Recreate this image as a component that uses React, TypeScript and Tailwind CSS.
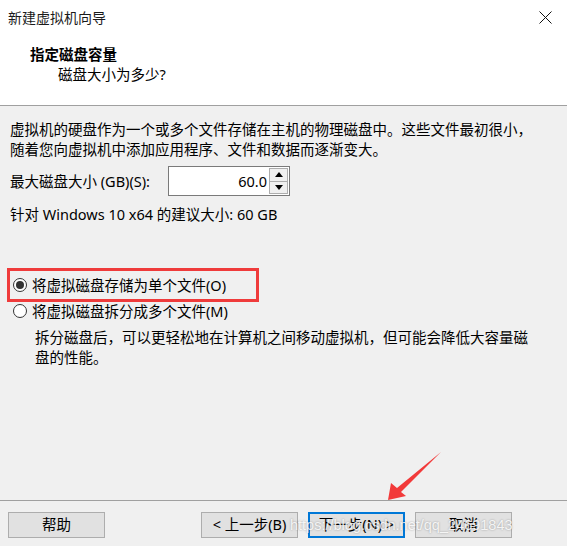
import React from "react";

const font = { fontFamily: '"Noto Sans", "Noto Sans CJK SC", sans-serif' };

function Radio({ checked }: { checked?: boolean }) {
  return (
    <span className="flex h-[14px] w-[14px] shrink-0 items-center justify-center rounded-full border border-[#333333] bg-white">
      {checked && <span className="h-[8px] w-[8px] rounded-full bg-[#333333]" />}
    </span>
  );
}

function Btn({ children, primary }: { children: React.ReactNode; primary?: boolean }) {
  return (
    <div
      className={
        "flex h-[26px] w-[97px] items-center justify-center bg-[#e1e1e1] text-[14.5px] text-black " +
        (primary ? "border-2 border-[#0078d7]" : "border border-[#adadad]")
      }
    >
      {children}
    </div>
  );
}

export default function App() {
  return (
    <div className="relative flex h-[546px] w-[567px] flex-col overflow-hidden bg-[#f0f0f0] text-black" style={font}>
      {/* title bar */}
      <div className="flex h-[36px] shrink-0 items-center justify-between bg-white pl-[8px] pr-[15px]">
        <span className="text-[14px] leading-none text-[#1a1a1a]">新建虚拟机向导</span>
        <svg width="13" height="13" viewBox="0 0 13 13" className="mt-[-1px]">
          <path d="M0.5 0.5 L12.5 12.5 M12.5 0.5 L0.5 12.5" stroke="#111" strokeWidth="1" />
        </svg>
      </div>
      {/* header */}
      <div className="shrink-0 bg-white pb-[21px] pt-[8px]">
        <div className="pl-[30px] text-[14.5px] font-bold leading-[20px]">指定磁盘容量</div>
        <div className="pl-[58px] text-[14.5px] leading-[20px]">磁盘大小为多少?</div>
      </div>
      <div className="h-px shrink-0 bg-[#a0a0a0]" />
      {/* body */}
      <div className="flex flex-1 flex-col px-[10px] pt-[13px] text-[14.5px] leading-[20px]">
        <div className="whitespace-nowrap">
          虚拟机的硬盘作为一个或多个文件存储在主机的物理磁盘中。这些文件最初很小，
          <br />
          随着您向虚拟机中添加应用程序、文件和数据而逐渐变大。
        </div>
        <div className="mt-[7px] flex items-center">
          <span className="w-[158px] whitespace-nowrap">最大磁盘大小 (GB)(S):</span>
          <div className="flex h-[30px] w-[122px] border border-[#7a7a7a] bg-white">
            <div className="flex flex-1 items-center justify-end pr-[2px]">60.0</div>
            <div className="my-[1px] mr-[1px] flex w-[19px] flex-col border border-[#adadad] bg-[#f0f0f0]">
              <div className="flex flex-1 items-center justify-center border-b border-[#adadad]">
                <svg width="8" height="5" viewBox="0 0 8 5"><path d="M4 0 L8 5 L0 5 Z" fill="#000" /></svg>
              </div>
              <div className="flex flex-1 items-center justify-center">
                <svg width="8" height="5" viewBox="0 0 8 5"><path d="M0 0 L8 0 L4 5 Z" fill="#000" /></svg>
              </div>
            </div>
          </div>
        </div>
        <div className="mt-[8px] whitespace-nowrap">针对 Windows 10 x64 的建议大小: 60 GB</div>

        <div className="mt-[51px] flex items-center gap-[5px] pl-[3px]">
          <Radio checked />
          <span>将虚拟磁盘存储为单个文件(O)</span>
        </div>
        <div className="mt-[6px] flex items-center gap-[5px] pl-[3px]">
          <Radio />
          <span>将虚拟磁盘拆分成多个文件(M)</span>
        </div>
        <div className="mt-[6px] whitespace-nowrap pl-[25px]">
          拆分磁盘后，可以更轻松地在计算机之间移动虚拟机，但可能会降低大容量磁
          <br />
          盘的性能。
        </div>
      </div>
      <div className="h-px shrink-0 bg-[#a0a0a0]" />
      {/* footer */}
      <div className="flex h-[45px] shrink-0 items-start pl-[8px] pt-[11px]">
        <Btn>帮助</Btn>
        <div className="ml-[96px] flex gap-[10px]">
          <Btn>&lt; 上一步(B)</Btn>
          <Btn primary>下一步(N) &gt;</Btn>
          <Btn>取消</Btn>
        </div>
      </div>

      {/* annotation: red box */}
      <div className="pointer-events-none absolute left-[7px] top-[268px] h-[34px] w-[252px] border-[3px] border-[#ef3b3b]" />
      {/* annotation: arrow */}
      <svg className="pointer-events-none absolute left-0 top-0" width="567" height="546" viewBox="0 0 567 546">
        <polygon points="388,500 391,483 397,488 441,452 401,492 406,496" fill="#f23a3a" />
      </svg>
      {/* watermark */}
      <div
        className="pointer-events-none absolute left-[290px] top-[515px] whitespace-nowrap text-[14.5px] leading-[20px] text-white/85"
        style={{ fontFamily: '"Liberation Sans", Arial, sans-serif', textShadow: "0 0 2px rgba(0,0,0,0.35)" }}
      >
        https://blog.csdn.net/qq_24691843
      </div>
    </div>
  );
}
